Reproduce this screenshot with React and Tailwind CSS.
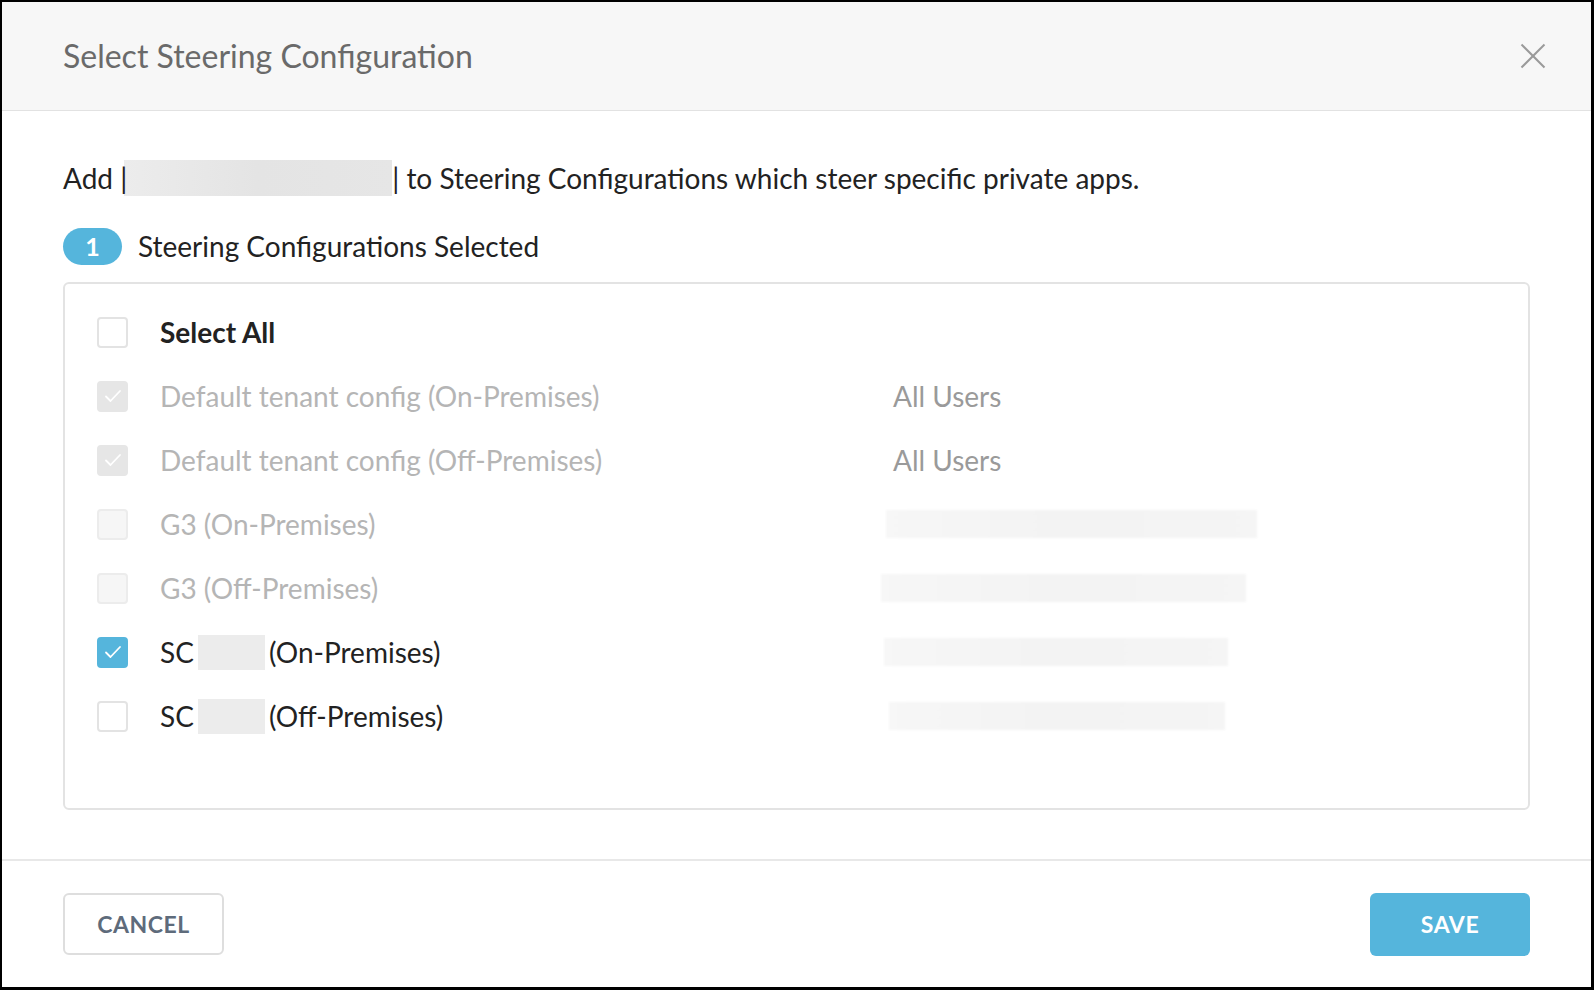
import { useState } from 'react'

const FONT = { fontFamily: 'Lato, "Open Sans", "Liberation Sans", sans-serif' }

const FILAS = [
  { id: 'def-on', nombre: 'Default tenant config (On-Premises)', usuarios: 'All Users', checked: true, disabled: true },
  { id: 'def-off', nombre: 'Default tenant config (Off-Premises)', usuarios: 'All Users', checked: true, disabled: true },
  { id: 'g3-on', nombre: 'G3 (On-Premises)', blur: 'ml-[-7px] w-[371px]', checked: false, disabled: true },
  { id: 'g3-off', nombre: 'G3 (Off-Premises)', blur: 'ml-[-12px] w-[365px]', checked: false, disabled: true },
  { id: 'sc-on', sc: true, sufijo: '(On-Premises)', blur: 'ml-[-9px] w-[344px]', checked: true, disabled: false },
  { id: 'sc-off', sc: true, sufijo: '(Off-Premises)', blur: 'ml-[-4px] w-[336px]', checked: false, disabled: false },
]

function Check({ checked, disabled, onClick }) {
  let cls = 'bg-white border-2 border-[#e3e3e3]'
  if (checked && !disabled) cls = 'bg-[#55b5dc] border-2 border-[#55b5dc]'
  else if (checked && disabled) cls = 'bg-[#e6e6e6] border-2 border-[#e6e6e6]'
  else if (disabled) cls = 'bg-[#f6f6f6] border-2 border-[#ececec]'
  return (
    <button
      type="button"
      onClick={onClick}
      disabled={disabled}
      className={`w-[31px] h-[31px] rounded-[4px] flex items-center justify-center shrink-0 ${cls}`}
    >
      {checked && (
        <svg width="18" height="14" viewBox="0 0 18 14" fill="none">
          <polyline points="2,7.5 6.5,12 16,2" stroke="white" strokeWidth="1.8" strokeLinecap="round" strokeLinejoin="round" />
        </svg>
      )}
    </button>
  )
}

export default function App() {
  const [filas, setFilas] = useState(FILAS)
  const seleccionadas = filas.filter(f => f.checked && !f.disabled).length
  const editables = filas.filter(f => !f.disabled)
  const todas = editables.every(f => f.checked)

  const toggle = (id) => setFilas(fs => fs.map(f => (f.id === id ? { ...f, checked: !f.checked } : f)))
  const toggleTodas = () => setFilas(fs => fs.map(f => (f.disabled ? f : { ...f, checked: !todas })))

  return (
    <div className="w-[1594px] h-[990px] bg-black pt-[2px] pl-[2px] pr-[3px] pb-[3px]" style={FONT}>
      <div className="w-full h-full bg-white flex flex-col">
        {/* Cabecera */}
        <div className="h-[109px] shrink-0 bg-[#f7f7f7] border-b border-[#e2e2e2] flex items-center justify-between pl-[61px] pr-[45px]">
          <h2 className="text-[32px] text-[#6a6a6a] leading-none">Select Steering Configuration</h2>
          <button type="button" className="w-[26px] h-[26px] flex items-center justify-center">
            <svg width="26" height="26" viewBox="0 0 26 26" fill="none">
              <line x1="1.5" y1="1.5" x2="24.5" y2="24.5" stroke="#9a9a9a" strokeWidth="2" />
              <line x1="24.5" y1="1.5" x2="1.5" y2="24.5" stroke="#9a9a9a" strokeWidth="2" />
            </svg>
          </button>
        </div>

        {/* Cuerpo */}
        <div className="flex-1 px-[61px] pt-[49px]">
          <p className="text-[28px] leading-[36px] text-[#222] flex items-center whitespace-pre">
            <span>Add </span>
            <span className="relative z-10">|</span>
            <span className="inline-block w-[268px] h-[36px] ml-[-3px] bg-gradient-to-r from-[#ececec] via-[#e4e4e4] to-[#e6e6e6]" />
            <span>| to Steering Configurations which steer specific private apps.</span>
          </p>

          <div className="mt-[32px] flex items-center gap-[16px]">
            <span className="w-[59px] h-[37px] rounded-full bg-[#55b5dc] text-white font-bold text-[25px] leading-none flex items-center justify-center">
              {seleccionadas}
            </span>
            <span className="text-[28px] leading-[37px] text-[#222]">Steering Configurations Selected</span>
          </div>

          <div className="mt-[17px] h-[528px] border-2 border-[#e3e3e3] rounded-[6px] pt-[16px] pl-[32px]">
            <div className="h-[64px] flex items-center gap-[32px]">
              <Check checked={todas && false} disabled={false} onClick={toggleTodas} />
              <span className="text-[28px] font-bold text-[#222]">Select All</span>
            </div>
            {filas.map(f => (
              <div key={f.id} className="h-[64px] grid grid-cols-[796px_1fr] items-center">
                <div className="flex items-center gap-[32px]">
                  <Check checked={f.checked} disabled={f.disabled} onClick={() => toggle(f.id)} />
                  {f.sc ? (
                    <span className="text-[28px] text-[#222] flex items-center">
                      SC
                      <span className="inline-block w-[67px] h-[35px] mx-[4px] bg-[#ececec]" />
                      {f.sufijo}
                    </span>
                  ) : (
                    <span className={`text-[28px] ${f.disabled ? 'text-[#b5b5b5]' : 'text-[#222]'}`}>{f.nombre}</span>
                  )}
                </div>
                <div>
                  {f.usuarios ? (
                    <span className="text-[28px] text-[#9a9a9a]">{f.usuarios}</span>
                  ) : (
                    <div className={`h-[28px] ${f.blur} bg-gradient-to-r from-[#f7f7f7] via-[#f3f3f3] to-[#f5f5f5] blur-[1px]`} />
                  )}
                </div>
              </div>
            ))}
          </div>
        </div>

        {/* Pie */}
        <div className="h-[128px] shrink-0 border-t-2 border-[#e8e8e8] px-[61px] flex items-center justify-between">
          <button
            type="button"
            className="w-[161px] h-[62px] border-2 border-[#dedede] rounded-[6px] text-[23px] font-bold text-[#5e6b7b] tracking-wide"
          >
            CANCEL
          </button>
          <button
            type="button"
            className="w-[160px] h-[63px] bg-[#55b5dc] rounded-[6px] text-[23px] font-bold text-white tracking-wide"
          >
            SAVE
          </button>
        </div>
      </div>
    </div>
  )
}
